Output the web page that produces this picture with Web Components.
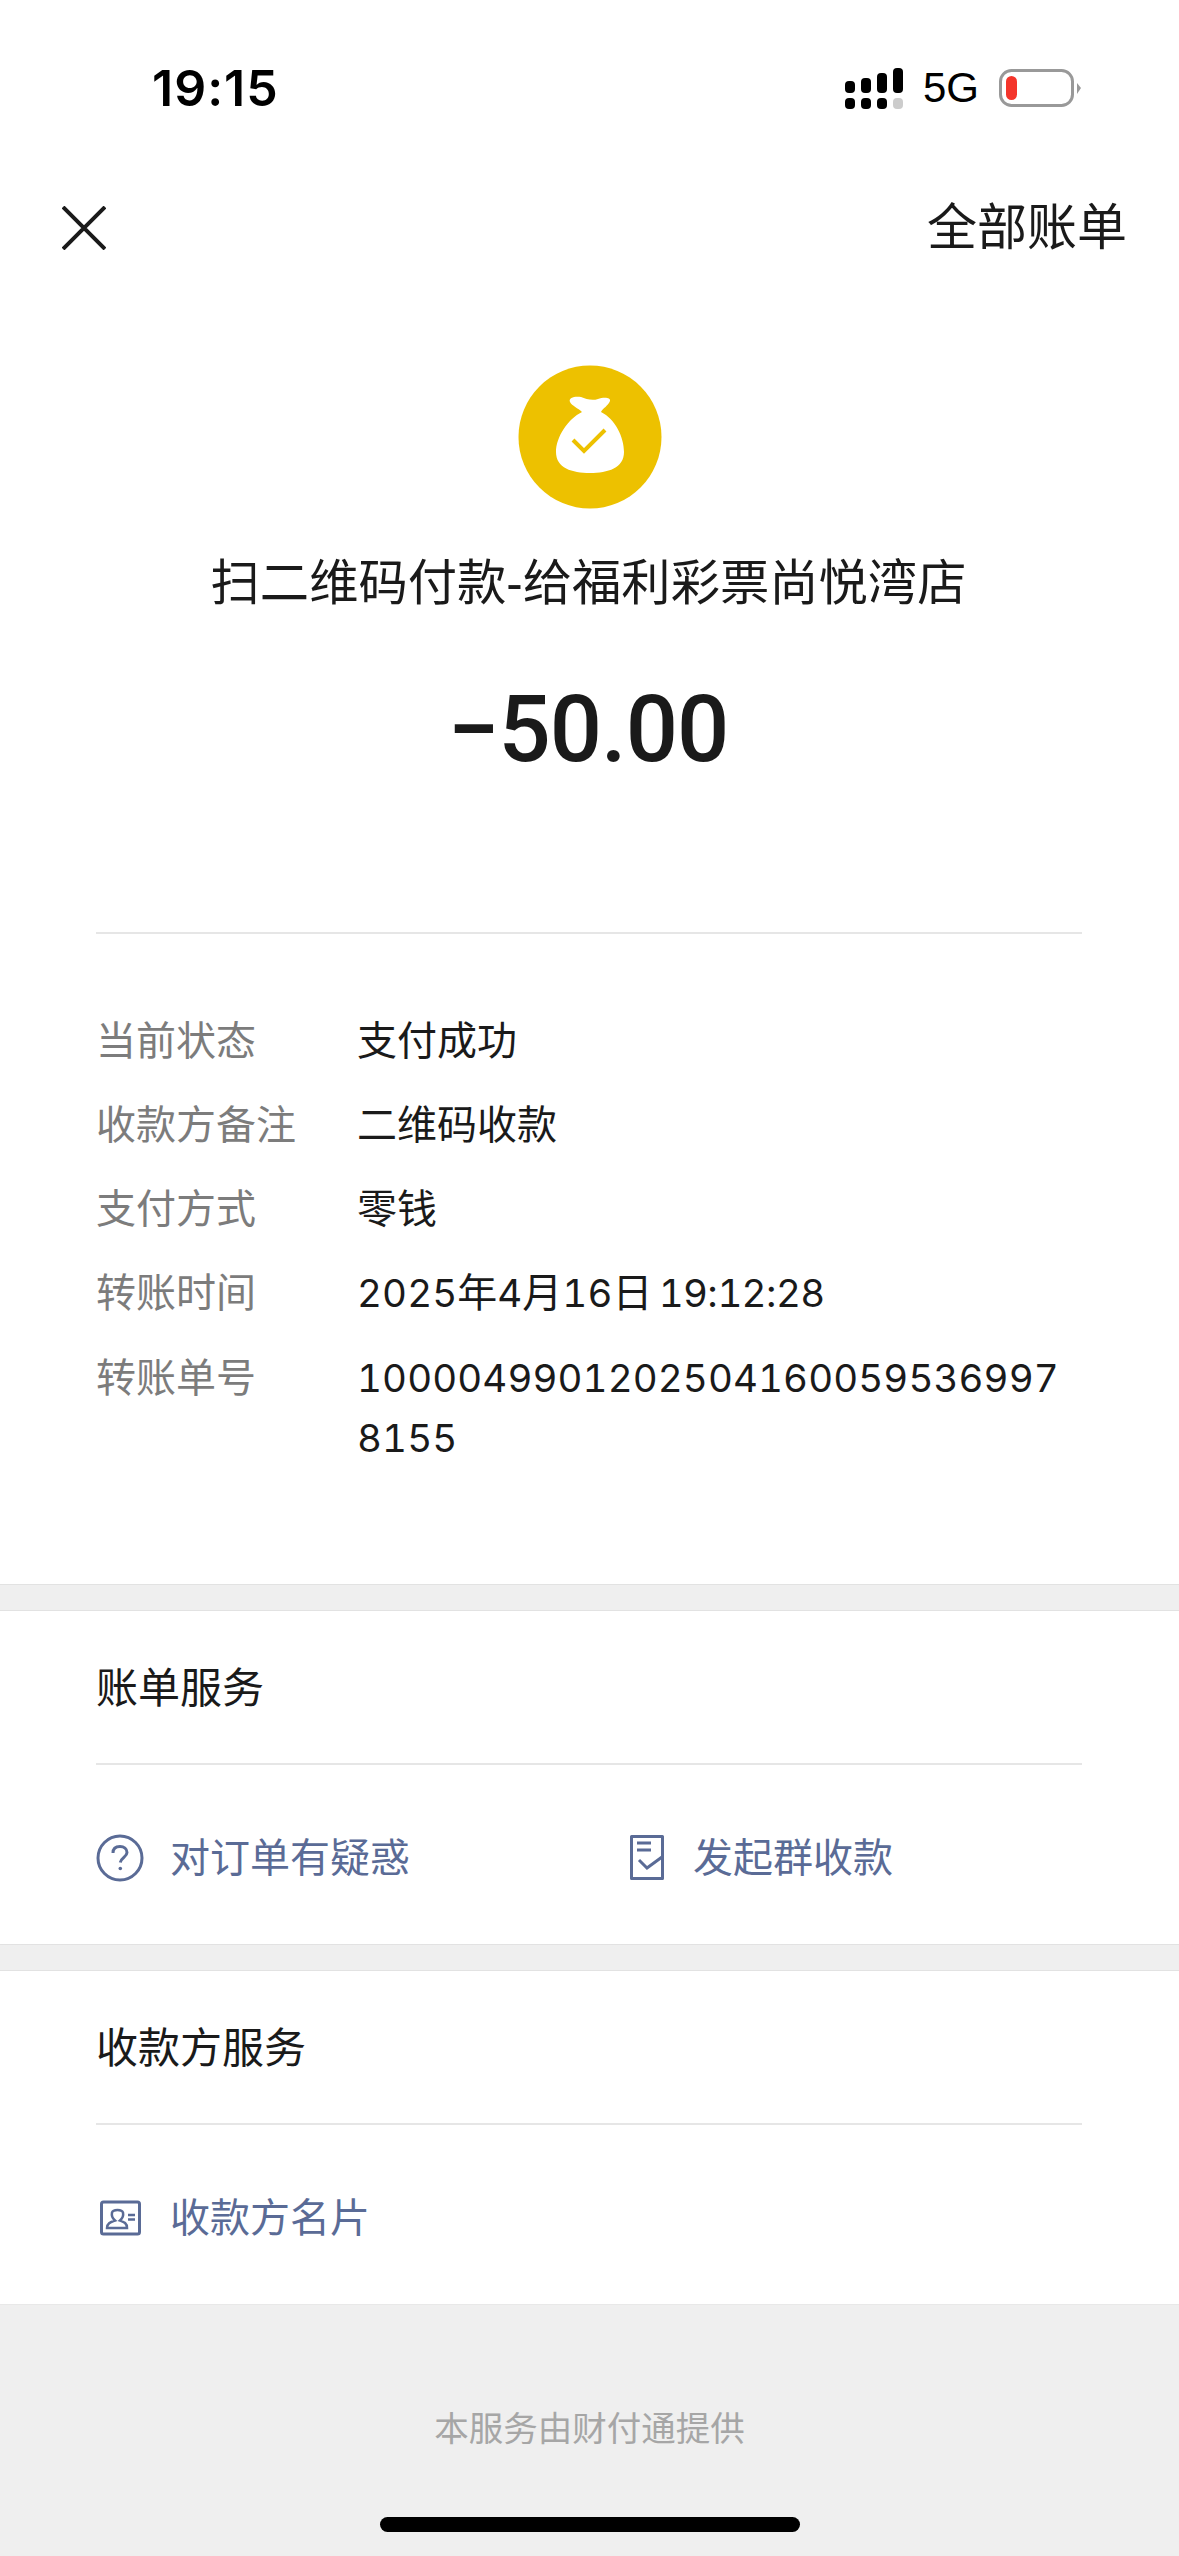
<!DOCTYPE html>
<html lang="zh-CN">
<head>
<meta charset="utf-8">
<title>账单详情</title>
<style>
html, body { margin: 0; padding: 0; }
body {
  min-height: 100vh;
  display: flex;
  flex-direction: column;
  background: #fff;
  color: #1a1a1a;
  font-family: "Liberation Sans", "Noto Sans CJK SC", sans-serif;
}
</style>
</head>
<body>
<status-bar></status-bar>
<nav-bar></nav-bar>
<pay-summary title-text="扫二维码付款-给福利彩票尚悦湾店" amount="−50.00"></pay-summary>
<detail-list>
  <detail-row label="当前状态">支付成功</detail-row>
  <detail-row label="收款方备注">二维码收款</detail-row>
  <detail-row label="支付方式">零钱</detail-row>
  <detail-row label="转账时间"><span class="tn">2025</span>年<span class="tn">4</span>月<span class="tn">16</span>日 <span class="tn tm first">19</span><span class="tm">:</span><span class="tn tm">12</span><span class="tm">:</span><span class="tn tm">28</span></detail-row>
  <detail-row label="转账单号"><span class="tn">10000499012025041600595369978155</span></detail-row>
</detail-list>
<gap-band></gap-band>
<service-card heading="账单服务">
  <service-link icon="question" style="width:531px">对订单有疑惑</service-link>
  <service-link icon="doc">发起群收款</service-link>
</service-card>
<gap-band></gap-band>
<service-card heading="收款方服务">
  <service-link icon="card">收款方名片</service-link>
</service-card>
<page-footer>本服务由财付通提供</page-footer>

<script>
const CJK = `"Liberation Sans", "Noto Sans CJK SC", sans-serif`;

class StatusBar extends HTMLElement {
  constructor() {
    super();
    this.attachShadow({ mode: "open" }).innerHTML = `
      <style>
        :host { display: flex; align-items: center; height: 176px; padding: 0 98px 0 152px; box-sizing: border-box; }
        .time { font: 600 50px/60px Inter, sans-serif; color: #000; letter-spacing: 1px; flex: 1; }
        .right { display: flex; align-items: center; gap: 20px; }
        .net { font: 400 42px/48px "Liberation Sans", sans-serif; color: #000; }
        svg { display: block; }
      </style>
      <div class="time">19:15</div>
      <div class="right">
        <svg width="58" height="41" viewBox="0 0 58 41">
          <g fill="#000">
            <rect x="0" y="13" width="10" height="12" rx="4"/><rect x="16" y="10" width="10" height="15" rx="4"/>
            <rect x="32" y="5" width="10" height="20" rx="4"/><rect x="48" y="0" width="10" height="25" rx="4"/>
            <rect x="0" y="30" width="10" height="11" rx="4"/><rect x="16" y="30" width="10" height="11" rx="4"/>
            <rect x="32" y="30" width="10" height="11" rx="4"/>
          </g>
          <rect x="48" y="30" width="10" height="11" rx="4" fill="#ccc"/>
        </svg>
        <div class="net">5G</div>
        <svg width="82" height="38" viewBox="0 0 82 38">
          <rect x="1.500" y="1.500" width="72" height="35" rx="11" fill="#fff" stroke="#999" stroke-width="3"/>
          <rect x="7" y="7" width="11" height="24" rx="5.500" fill="#f4352b"/>
          <path d="M78 14 L82 19 L78 25Z" fill="#999"/>
        </svg>
      </div>`;
  }
}

class NavBar extends HTMLElement {
  constructor() {
    super();
    this.attachShadow({ mode: "open" }).innerHTML = `
      <style>
        :host { display: flex; justify-content: space-between; align-items: center; height: 104px; padding: 0 52px 0 62px; font-family: ${CJK}; }
        .all { font-size: 50px; line-height: 60px; color: #1a1a1a; }
        svg { display: block; }
      </style>
      <svg width="44" height="44" viewBox="0 0 44 44"><path d="M1 1 L43 43 M43 1 L1 43" stroke="#1a1a1a" stroke-width="4" fill="none"/></svg>
      <div class="all">全部账单</div>`;
  }
}

class PaySummary extends HTMLElement {
  constructor() {
    super();
    this.attachShadow({ mode: "open" }).innerHTML = `
      <style>
        :host { display: flex; flex-direction: column; align-items: center; padding-top: 85px; }
        svg { display: block; }
        .title { margin-top: 44px; font: 400 49.300px/60px ${CJK}; color: #1a1a1a; white-space: nowrap; padding-right: 2px; }
        .amount { margin-top: 67px; font: 500 92px/100px Roboto, sans-serif; letter-spacing: -1px; color: #1a1a1a; padding-right: 3px; }
      </style>
      <svg width="144" height="144" viewBox="0 0 144 144">
        <circle cx="72" cy="72" r="71.500" fill="#edc100"/>
        <path d="M52 37 C50 32 58 31 63 32 C68 34 74 36 80 34 C85 32 93 32 92 36 C90 41 85 43 83 47 C97 54 106 72 106 87 C106 103 90 108 72 108 C54 108 38 103 38 87 C38 72 50 54 64 47 C60 43 54 41 52 37Z" fill="#fff"/>
        <path d="M55 75 L66 86 L87 65" fill="none" stroke="#edc100" stroke-width="4"/>
      </svg>
      <div class="title"></div>
      <div class="amount"></div>`;
  }
  connectedCallback() {
    this.shadowRoot.querySelector(".title").textContent = this.getAttribute("title-text");
    this.shadowRoot.querySelector(".amount").textContent = this.getAttribute("amount");
  }
}

class DetailList extends HTMLElement {
  constructor() {
    super();
    this.attachShadow({ mode: "open" }).innerHTML = `
      <style>
        :host { display: block; margin: 152px 97px 0 96px; padding: 77px 0 116px; border-top: 2px solid #e6e6e6; }
        .rows { display: flex; flex-direction: column; gap: 25px; }
      </style>
      <div class="rows"><slot></slot></div>`;
  }
}

class DetailRow extends HTMLElement {
  constructor() {
    super();
    this.attachShadow({ mode: "open" }).innerHTML = `
      <style>
        :host { display: grid; grid-template-columns: 261px 1fr; font: 400 40px/59px Inter, "Noto Sans CJK SC", sans-serif; }
        .label { color: #7c7c7c; }
        .value { color: #1a1a1a; word-break: break-all; padding-right: 10px; }
        ::slotted(span) { font-size: 38.500px; }
        ::slotted(.tn) { font-feature-settings: "tnum"; letter-spacing: 0.100px; }
        ::slotted(.tm) { letter-spacing: -0.800px; }
        ::slotted(.first) { margin-left: -5px; }
      </style>
      <div class="label"></div>
      <div class="value"><slot></slot></div>`;
  }
  connectedCallback() {
    this.shadowRoot.querySelector(".label").textContent = this.getAttribute("label");
  }
}

class GapBand extends HTMLElement {
  constructor() {
    super();
    this.attachShadow({ mode: "open" }).innerHTML = `
      <style>:host { display: block; height: 25px; background: #efefef; border-top: 1px solid #e2e2e2; }</style>`;
  }
}

class ServiceCard extends HTMLElement {
  constructor() {
    super();
    this.attachShadow({ mode: "open" }).innerHTML = `
      <style>
        :host { display: block; background: #fff; border-top: 1px solid #e2e2e2; }
        .h { margin: 0 97px 0 96px; height: 154px; padding-top: 3px; display: flex; align-items: center; box-sizing: border-box; border-bottom: 2px solid #e6e6e6; font: 400 42px/60px ${CJK}; color: #1a1a1a; }
        .links { display: flex; margin: 0 97px 0 96px; height: 179px; padding-top: 7px; box-sizing: border-box; align-items: center; }
      </style>
      <div class="h"></div>
      <div class="links"><slot></slot></div>`;
  }
  connectedCallback() {
    this.shadowRoot.querySelector(".h").textContent = this.getAttribute("heading");
  }
}

const ICONS = {
  question: `<svg width="48" height="48" viewBox="0 0 48 48" fill="none" stroke="currentColor" stroke-width="3">
      <circle cx="24" cy="24" r="22"/>
      <path d="M17 19 C17 14.500 20 12.500 24 12.500 C28 12.500 31 14.800 31 18.500 C31 23 25 23.500 24.300 28.500"/>
      <circle cx="24.300" cy="34.500" r="1.800" fill="currentColor" stroke="none"/></svg>`,
  doc: `<svg width="40" height="48" viewBox="4 0 40 48" fill="none" stroke="currentColor" stroke-width="3">
      <path d="M8.500 16 V2.500 H39.500 V44.500 H8.500 V16" stroke-linejoin="round"/>
      <path d="M14 9 H28 M14 16 H28 M16 26 L24 34 L39 23"/></svg>`,
  card: `<svg width="48" height="48" viewBox="0 0 48 48" fill="none" stroke="currentColor" stroke-width="3">
      <rect x="5.500" y="8" width="38" height="32" rx="2"/>
      <path d="M11 34 C11 29 15 28 19 26.500 C16 24 15.500 21 16 18.500 C17 15 26 15 27 18.500 C27.500 21 27 24 24 26.500 C28 28 31 29 31 34 Z" stroke-width="2.500"/>
      <path d="M32 21 H39 M32 25.500 H39" stroke-width="2.500"/></svg>`
};

class ServiceLink extends HTMLElement {
  constructor() {
    super();
    this.attachShadow({ mode: "open" });
  }
  connectedCallback() {
    this.shadowRoot.innerHTML = `
      <style>
        :host { display: flex; align-items: center; gap: 26px; box-sizing: border-box; color: #5a6b96; font: 400 40px/60px ${CJK}; }
        svg { display: block; flex: none; }
      </style>
      ${ICONS[this.getAttribute("icon")]}
      <span><slot></slot></span>`;
  }
}

class PageFooter extends HTMLElement {
  constructor() {
    super();
    this.attachShadow({ mode: "open" }).innerHTML = `
      <style>
        :host { display: block; flex: 1; position: relative; background: #efefef; text-align: center; padding-top: 99px; font: 400 34.500px/50px ${CJK}; color: #a6a6a6; border-top: 1px solid #e8e8e8; }
        .home { position: absolute; left: 380px; bottom: 24px; width: 420px; height: 15px; border-radius: 8px; background: #000; }
      </style>
      <slot></slot>
      <div class="home"></div>`;
  }
}

customElements.define("status-bar", StatusBar);
customElements.define("nav-bar", NavBar);
customElements.define("pay-summary", PaySummary);
customElements.define("detail-list", DetailList);
customElements.define("detail-row", DetailRow);
customElements.define("gap-band", GapBand);
customElements.define("service-card", ServiceCard);
customElements.define("service-link", ServiceLink);
customElements.define("page-footer", PageFooter);
</script>
</body>
</html>
